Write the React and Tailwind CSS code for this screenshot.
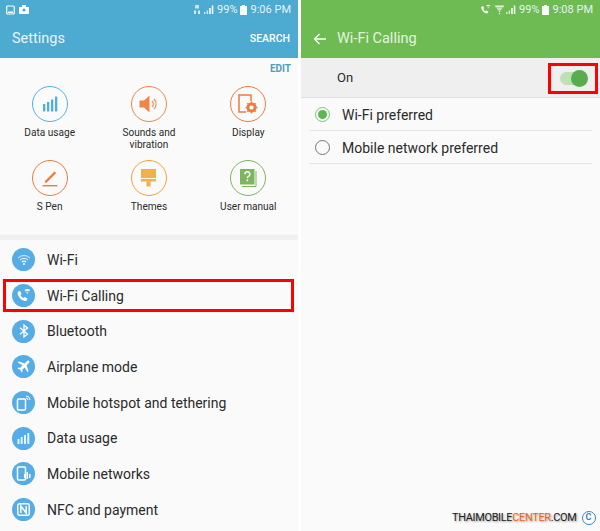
const font = { fontFamily: '"Roboto", "Liberation Sans", sans-serif' };

function Battery({ className = "" }) {
  return (
    <svg width="7" height="10" viewBox="0 0 7 10" className={className}>
      <path d="M2 0h3v1h2v9H0V1h2z" fill="#fff" opacity="0.95" />
    </svg>
  );
}

function Signal() {
  return (
    <svg width="10" height="9" viewBox="0 0 10 9">
      <rect x="0" y="7" width="1.5" height="2" fill="#fff" opacity="0.7" />
      <rect x="2.6" y="5.5" width="1.5" height="3.5" fill="#fff" opacity="0.7" />
      <rect x="5.2" y="3" width="1.5" height="6" fill="#fff" />
      <rect x="7.8" y="0.5" width="1.5" height="8.5" fill="#fff" />
    </svg>
  );
}

function CallGlyph({ size = 10, color = "#fff" }) {
  return (
    <svg width={size} height={size} viewBox="0 0 13 13">
      <path d="M2.200 3 3.600 2.500 4.800 5 3.800 6c.5 1.200 1.400 2.100 2.600 2.700l1-1L9.900 8.900l-.4 1.500c-.2.700-.8 1-1.400.9C4.700 10.800 2 8 1.400 4.500 1.300 3.800 1.600 3.200 2.200 3z" fill={color} />
      <path d="M7.300 1.500a5 5 0 0 1 5 0L11.300 3a3.200 3.200 0 0 0-3 0zM8.800 3.700h2L9.800 5.300z" fill={color} opacity="0.85" />
    </svg>
  );
}

function WifiSmall({ color = "#fff" }) {
  return (
    <svg width="11" height="11" viewBox="0 0 11 11">
      <path d="M0.500 1.500h10L9 3.500H2z" fill={color} opacity="0.8" />
      <path d="M2.700 4.300h5.600L7.300 5.800H3.700z" fill={color} opacity="0.8" />
      <path d="M4.300 6.500h2.400L5.500 8.300z" fill={color} />
      <rect x="4.900" y="8.800" width="1.200" height="1.800" fill={color} opacity="0.7" />
    </svg>
  );
}

function StatusBar({ time, left, mid }) {
  return (
    <div className="h-[19px] flex items-center justify-between pl-[6px] pr-[7px] text-[11px] leading-none text-[#e6f3f8]">
      <div className="flex items-center gap-[4px]">{left}</div>
      <div className="flex items-center">
        {mid}
        <Signal />
        <span className="ml-[3px]">99%</span>
        <Battery className="ml-[2px]" />
        <span className="ml-[4px]">{time}</span>
      </div>
    </div>
  );
}

const gridIcons = {
  data: (
    <svg width="16" height="16" viewBox="0 0 16 16" fill="#4daee6">
      <rect x="1" y="8" width="2.300" height="7.500" />
      <rect x="5" y="6" width="2.300" height="9.500" />
      <rect x="9" y="3.500" width="2.300" height="12" />
      <rect x="13" y="0.500" width="2.300" height="15" />
    </svg>
  ),
  sound: (
    <svg width="20" height="18" viewBox="0 0 20 18">
      <path d="M0.500 5.500H5L10.500 0.500v17L5 12.500H0.500z" fill="#f0854a" />
      <path d="M13 6a4 4 0 0 1 0 6M15 4a7 7 0 0 1 0 10" fill="none" stroke="#f0854a" strokeWidth="1.100" />
    </svg>
  ),
  display: (
    <svg width="22" height="20" viewBox="0 0 22 20">
      <path d="M9 18H2V1h12v6" fill="none" stroke="#ee7b3e" strokeWidth="1.500" />
      <circle cx="14.500" cy="13.500" r="3.800" fill="none" stroke="#ee7b3e" strokeWidth="2.400" />
      <path d="M14.500 7.500v12M8.500 13.500h12M10.300 9.300l8.400 8.400M18.700 9.300l-8.400 8.400" stroke="#ee7b3e" strokeWidth="1.500" />
      <circle cx="14.500" cy="13.500" r="2" fill="#fafafa" />
    </svg>
  ),
  pen: (
    <svg width="16" height="17" viewBox="0 0 16 17">
      <path d="M3 11 12.500 1.500l1.700 1.500L5 12.300 2.800 13z" fill="#ee7b3e" />
      <rect x="0.500" y="15" width="15" height="1.400" fill="#ee7b3e" />
    </svg>
  ),
  themes: (
    <svg width="15" height="18" viewBox="0 0 15 18">
      <rect x="0" y="0" width="15" height="9" fill="#f2b04d" />
      <rect x="0" y="10" width="15" height="2.500" fill="#f2b04d" />
      <rect x="5.500" y="12.500" width="4" height="5" fill="#f2b04d" />
    </svg>
  ),
  manual: (
    <svg width="17" height="18" viewBox="0 0 17 18">
      <rect x="0" y="0" width="14.500" height="15.500" fill="#7fb55f" />
      <path d="M16 2v15.500H2" fill="none" stroke="#7fb55f" strokeWidth="1" />
      <path d="M5 5.200a2.400 2.400 0 1 1 3.400 2.200c-.8.400-1.100.9-1.100 1.800" fill="none" stroke="#fafafa" strokeWidth="1.500" />
      <rect x="6.500" y="10.500" width="1.700" height="1.800" fill="#fafafa" />
    </svg>
  ),
};

function GridItem({ label, border, icon }) {
  return (
    <div className="flex flex-col items-center">
      <div className={`w-[36px] h-[36px] rounded-full border-[1.500px] ${border} flex items-center justify-center`}>
        {gridIcons[icon]}
      </div>
      <div className="mt-[5px] text-[10.100px] leading-[11.500px] text-center text-[#2b2b2b] whitespace-pre-line">{label}</div>
    </div>
  );
}

const W = "#fff";
const listIcons = {
  wifi: (
    <svg width="14" height="12" viewBox="0 0 14 12" fill="none" stroke={W}>
      <path d="M1 4a8.500 8.500 0 0 1 12 0" strokeWidth="1" opacity="0.8" />
      <path d="M3 6a5.700 5.700 0 0 1 8 0" strokeWidth="1" opacity="0.9" />
      <path d="M5 8a2.800 2.800 0 0 1 4 0" strokeWidth="1.100" />
      <circle cx="7" cy="10" r="1" fill={W} stroke="none" />
    </svg>
  ),
  call: <CallGlyph size={15} />,
  bt: (
    <svg width="10" height="14" viewBox="0 0 10 14" fill="none" stroke={W} strokeWidth="1.300">
      <path d="M1 3.800 8.500 10 5 13V1l3.500 3L1 10.200" />
    </svg>
  ),
  plane: (
    <svg width="15" height="15" viewBox="0 0 24 24" fill={W}>
      <path d="M21 3c-1-1-2.500-.7-3.500.3L14 7 4.500 4 3 5.500 10.500 10 7 14l-3-.5L2.500 15l4.300 2 2.200 4.500 1.500-1.500-.5-3 4-3.500 4.500 7.500 1.500-1.500-3-9.500 3.700-3.500c1-1 1.300-2.500.3-3.500z" />
    </svg>
  ),
  hotspot: (
    <svg width="15" height="16" viewBox="0 0 15 16" fill="none" stroke={W}>
      <rect x="1.500" y="4" width="8" height="11" rx="1" strokeWidth="1.500" />
      <path d="M10 1a4 4 0 0 1 4 4M10 3a2 2 0 0 1 2 2" strokeWidth="1" />
    </svg>
  ),
  data: (
    <svg width="13" height="11" viewBox="0 0 13 11" fill={W}>
      <rect x="0.500" y="6" width="2" height="5" opacity="0.85" />
      <rect x="3.700" y="4" width="2" height="7" opacity="0.85" />
      <rect x="7" y="2" width="2" height="9" opacity="0.85" />
      <rect x="10.300" y="0" width="2" height="11" opacity="0.85" />
    </svg>
  ),
  mobile: (
    <svg width="15" height="15" viewBox="0 0 15 15">
      <rect x="1.500" y="1" width="8" height="13" rx="1" fill="none" stroke={W} strokeWidth="1.500" />
      <rect x="8" y="8" width="1.500" height="4" fill={W} />
      <rect x="10.500" y="6" width="1.500" height="7" fill={W} />
      <rect x="13" y="8" width="1.500" height="4" fill={W} />
    </svg>
  ),
  nfc: (
    <svg width="13" height="13" viewBox="0 0 13 13" fill="none" stroke={W}>
      <rect x="0.800" y="0.800" width="11.400" height="11.400" rx="1.500" strokeWidth="1.400" />
      <path d="M3.800 10V3l5.400 7V3" strokeWidth="1.500" />
    </svg>
  ),
};

const rows = [
  ["wifi", "Wi-Fi"],
  ["call", "Wi-Fi Calling"],
  ["bt", "Bluetooth"],
  ["plane", "Airplane mode"],
  ["hotspot", "Mobile hotspot and tethering"],
  ["data", "Data usage"],
  ["mobile", "Mobile networks"],
  ["nfc", "NFC and payment"],
];

function SettingsRow({ icon, label }) {
  return (
    <div className="h-[35.700px] flex items-center pl-[12px]">
      <div className="w-[23px] h-[23px] rounded-full bg-[#56ade6] flex items-center justify-center shrink-0">
        {listIcons[icon]}
      </div>
      <span className="ml-[12px] text-[14px] text-[#2a2a2a] leading-none">{label}</span>
    </div>
  );
}

function LeftPanel() {
  return (
    <div className="relative w-[298px] h-full bg-[#fafafa] flex flex-col overflow-hidden">
      <div className="h-[58px] bg-[#4daad0] shrink-0">
        <StatusBar
          time="9:06 PM"
          left={
            <>
              <svg width="9" height="10" viewBox="0 0 9 10" fill="none">
                <rect x="0.700" y="1" width="7.600" height="8" rx="1" stroke="#fff" strokeWidth="1.200" />
                <path d="M2 6.500h5V8H2z" fill="#fff" />
              </svg>
              <svg width="10" height="9" viewBox="0 0 10 9">
                <path d="M3 0h4v2h3v7H0V2h3z" fill="#fff" />
                <circle cx="5" cy="5" r="1.500" fill="#4daad0" />
              </svg>
            </>
          }
          mid={
            <svg width="6" height="9" viewBox="0 0 6 9" className="mr-[4px]" fill="#e6f3f8">
              <rect x="1" y="0" width="4" height="3.500" opacity="0.8" />
              <rect x="0" y="5.500" width="2" height="3.500" opacity="0.9" />
              <rect x="4" y="5.500" width="2" height="3.500" opacity="0.9" />
            </svg>
          }
        />
        <div className="h-[39px] pt-[1px] flex items-center justify-between pl-[12px] pr-[8px] text-[#e8f4f9]">
          <span className="text-[14.500px]">Settings</span>
          <span className="text-[10.500px] font-medium text-white">SEARCH</span>
        </div>
      </div>
      <div className="h-[177px] shrink-0 flex flex-col">
        <div className="h-[28px] pr-[7px] pt-[5px] text-right text-[10px] leading-[12px] font-bold text-[#4b9fbd]">EDIT</div>
        <div className="grid grid-cols-3">
          <div className="h-[74px]"><GridItem label="Data usage" border="border-[#4fb0ea]" icon="data" /></div>
          <div className="h-[74px]"><GridItem label={"Sounds and\nvibration"} border="border-[#f0854a]" icon="sound" /></div>
          <div className="h-[74px]"><GridItem label="Display" border="border-[#ee7b3e]" icon="display" /></div>
          <div><GridItem label="S Pen" border="border-[#ee7b3e]" icon="pen" /></div>
          <div><GridItem label="Themes" border="border-[#efa52f]" icon="themes" /></div>
          <div><GridItem label="User manual" border="border-[#7fb55f]" icon="manual" /></div>
        </div>
      </div>
      <div className="h-[5px] bg-[#f0f0f0] shrink-0" />
      <div className="pt-[2px] flex flex-col">
        {rows.map(([i, l]) => (
          <SettingsRow key={l} icon={i} label={l} />
        ))}
      </div>
      <div className="absolute left-[3px] top-[279px] w-[291px] h-[33px] border-[3px] border-[#ff0000]" />
    </div>
  );
}

function RightPanel() {
  return (
    <div className="relative w-[299px] h-full bg-[#fafafa] flex flex-col overflow-hidden">
      <div className="h-[58px] bg-[#6dbb52] shrink-0">
        <StatusBar
          time="9:08 PM"
          left={<span />}
          mid={
            <span className="flex items-center gap-[3px] mr-[1px]">
              <CallGlyph size={11} />
              <WifiSmall />
            </span>
          }
        />
        <div className="h-[39px] pt-[1px] flex items-center pl-[12px] text-[#e6f3df]">
          <svg width="14" height="12" viewBox="0 0 14 12" fill="none" stroke="#fff" strokeWidth="1.300">
            <path d="M13 6H1.500M6.500 1 1.500 6l5 5" />
          </svg>
          <span className="ml-[10px] text-[14.500px]">Wi-Fi Calling</span>
        </div>
      </div>
      <div className="h-[40px] pt-[1px] bg-[#efefef] border-b border-[#e2e2e2] shrink-0 flex items-center justify-between pl-[36px] pr-[13px]">
        <span className="text-[13px] text-[#2a2a2a]">On</span>
        <div className="relative w-[27px] h-[13px] rounded-full bg-[#bfe0b2]">
          <div className="absolute -right-[1px] -top-[2px] w-[17px] h-[17px] rounded-full bg-[#57ad4f]" />
        </div>
      </div>
      <div className="mx-[8px] flex flex-col">
        <div className="h-[33px] flex items-center border-b border-[#e6e6e6]">
          <div className="ml-[6px] w-[15px] h-[15px] rounded-full border border-[#7cc46f] flex items-center justify-center">
            <div className="w-[9px] h-[9px] rounded-full bg-[#5cb752]" />
          </div>
          <span className="ml-[12px] pt-[2px] text-[14px] text-[#2a2a2a]">Wi-Fi preferred</span>
        </div>
        <div className="h-[33px] flex items-center border-b border-[#e6e6e6]">
          <div className="ml-[6px] w-[15px] h-[15px] rounded-full border border-[#757575]" />
          <span className="ml-[12px] pt-[2px] text-[14px] text-[#2a2a2a]">Mobile network preferred</span>
        </div>
      </div>
      <div className="absolute left-[247px] top-[63px] w-[50px] h-[31px] border-[3px] border-[#ff0000]" />
      <div className="absolute left-[151px] top-[511px] flex items-center">
        <span className="text-[10.900px] leading-[14px] text-[#222] tracking-[-0.300px] [text-shadow:1px_1px_2px_#999]">
          THAIMOBILE<span className="text-[#f0621a]">CENTER</span>.COM
        </span>
        <span className="ml-[5px] w-[14px] h-[14px] rounded-full border-[1.500px] border-[#3f7fd0] bg-white text-[9px] leading-[11px] text-center font-bold text-[#3f7fd0]">C</span>
      </div>
    </div>
  );
}

export default function App() {
  return (
    <div style={font} className="w-[600px] h-[531px] bg-white flex gap-[3px] overflow-hidden">
      <LeftPanel />
      <RightPanel />
    </div>
  );
}
